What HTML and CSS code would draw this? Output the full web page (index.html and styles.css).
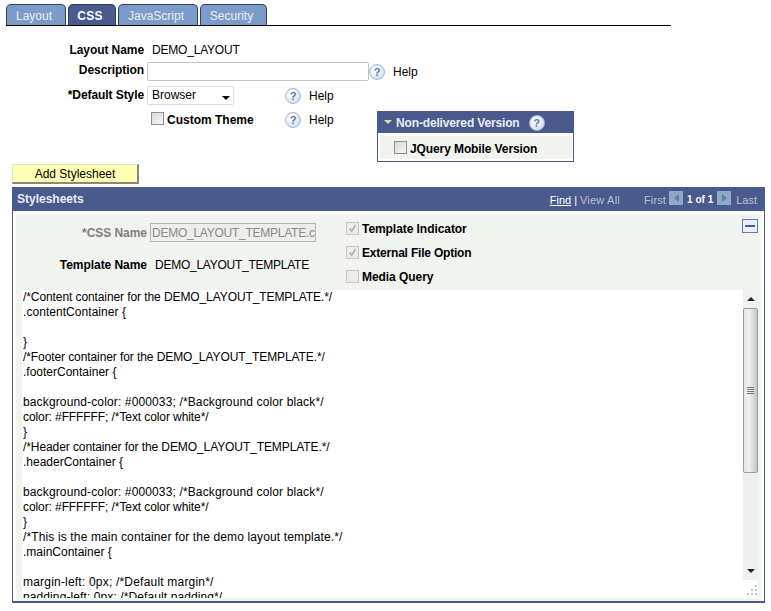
FILE: index.html
```html
<!DOCTYPE html>
<html lang="en">
<head>
<meta charset="utf-8">
<title>Layout CSS</title>
<link rel="stylesheet" href="styles.css">
</head>
<body>
<nav class="tabs">
  <a class="tab tab-layout">Layout</a>
  <a class="tab tab-css active">CSS</a>
  <a class="tab tab-js">JavaScript</a>
  <a class="tab tab-sec">Security</a>
</nav>

<section class="form">
  <div class="row row-name"><span class="label">Layout Name</span><span class="value">DEMO_LAYOUT</span></div>
  <div class="row row-desc">
    <span class="label">Description</span>
    <span class="input desc-input"></span>
    <span class="help-icon desc-icon">?</span><span class="help-text">Help</span>
  </div>
  <div class="split">
    <div class="split-left">
      <div class="row row-style">
        <span class="label">*Default Style</span>
        <span class="select">Browser<i class="select-arrow"></i></span>
        <span class="help-icon style-icon">?</span><span class="help-text">Help</span>
      </div>
      <div class="row row-theme">
        <span class="check"></span><span class="check-label theme-label">Custom Theme</span>
        <span class="help-icon theme-icon">?</span><span class="help-text">Help</span>
      </div>
    </div>
    <aside class="nd-box">
      <div class="nd-head">
        <i class="nd-arrow"></i><span class="nd-title">Non-delivered Version</span>
        <span class="help-icon nd-icon">?</span>
      </div>
      <div class="nd-body"><span class="check"></span><span class="check-label nd-label">JQuery Mobile Version</span></div>
    </aside>
  </div>
</section>

<button class="add-btn" type="button">Add Stylesheet</button>

<section class="panel">
  <header class="panel-head">
    <span class="panel-title">Stylesheets</span>
    <div class="pager">
      <a class="find">Find</a><span class="sep">|</span><span class="dim view-all">View All</span>
      <span class="dim first">First</span>
      <span class="nav-btn"><i class="tri-left"></i></span>
      <b class="count">1 of 1</b>
      <span class="nav-btn nav-next"><i class="tri-right"></i></span>
      <span class="dim last">Last</span>
    </div>
  </header>
  <div class="panel-body">
    <div class="fields">
      <div class="fields-left">
        <div class="f-row f-css">
          <span class="f-label disabled">*CSS Name</span>
          <span class="css-input">DEMO_LAYOUT_TEMPLATE.css</span>
        </div>
        <div class="f-row f-tpl">
          <span class="f-label">Template Name</span>
          <span class="tpl-value">DEMO_LAYOUT_TEMPLATE</span>
        </div>
      </div>
      <div class="fields-right">
        <div class="opt"><span class="check off"><svg viewBox="0 0 13 13" width="11" height="11"><path d="M3 6.5l2.5 3 4.5-7" fill="none" stroke="#a9a9a9" stroke-width="1.6"/></svg></span><span class="check-label">Template Indicator</span></div>
        <div class="opt"><span class="check off"><svg viewBox="0 0 13 13" width="11" height="11"><path d="M3 6.5l2.5 3 4.5-7" fill="none" stroke="#a9a9a9" stroke-width="1.6"/></svg></span><span class="check-label opt-tight">External File Option</span></div>
        <div class="opt"><span class="check off"></span><span class="check-label">Media Query</span></div>
      </div>
      <span class="collapse"><i></i></span>
    </div>
    <div class="editor">
<pre class="code"><span class="ls-n">/*Content container for the DEMO_LAYOUT_TEMPLATE.*/</span>
<span class="ls-c">.contentContainer {</span>

}
<span class="ls-n">/*Footer container for the DEMO_LAYOUT_TEMPLATE.*/</span>
.footerContainer {

<span class="ls-p">background-color: #000033; /*Background color black*/</span>
<span class="ls-n">color: #FFFFFF; /*Text color white*/</span>
}
<span class="ls-n">/*Header container for the DEMO_LAYOUT_TEMPLATE.*/</span>
.headerContainer {

<span class="ls-p">background-color: #000033; /*Background color black*/</span>
<span class="ls-n">color: #FFFFFF; /*Text color white*/</span>
}
<span class="ls-p">/*This is the main container for the demo layout template.*/</span>
.mainContainer {

<span class="ls-w">margin-left: 0px; /*Default margin*/</span>
<span class="ls-m">padding-left: 0px; /*Default padding*/</span></pre>
      <div class="scrollbar">
        <div class="sb-up"><i></i></div>
        <div class="sb-thumb"><i></i><i></i><i></i><i></i></div>
        <div class="sb-track"></div>
        <div class="sb-down"><i></i></div>
      </div>
      <svg class="grip" width="13" height="13" viewBox="0 0 13 13"><path fill="#c4c4c4" d="M10 1h2v2h-2zM6 5h2v2H6zM10 5h2v2h-2zM2 9h2v2H2zM6 9h2v2H6zM10 9h2v2h-2z"/></svg>
    </div>
  </div>
</section>
</body>
</html>
```

FILE: styles.css
```css
* { box-sizing: border-box; }
html, body { margin: 0; padding: 0; }
body {
  width: 771px;
  height: 611px;
  overflow: hidden;
  background: #fff;
  color: #000;
  font-family: "Liberation Sans", Arial, sans-serif;
  font-size: 12px;
  line-height: 14px;
}

/* tabs */
.tabs {
  display: flex;
  gap: 2px;
  width: 665px;
  height: 26px;
  margin-left: 6px;
  padding-top: 4px;
  border-bottom: 1px solid #000;
}
.tab {
  height: 21px;
  padding: 4px 4px 0 0;
  text-align: center;
  color: #e8eef6;
  background: #7b9cc9;
  border: 1px solid #2f3f66;
  border-bottom: 0;
  border-radius: 5px 5px 0 0;
}
.tab-layout { width: 60px; }
.tab-css { width: 48px; letter-spacing: 0.3px; }
.tab-js { width: 80px; }
.tab-sec { width: 67px; }
.tab.active { background: #4a5a8c; color: #fff; font-weight: bold; }

/* upper form */
.form { height: 135px; padding-top: 15px; }
.row { display: flex; align-items: center; }
.label {
  width: 144px;
  text-align: right;
  font-weight: bold;
  letter-spacing: -0.08px;
  flex: none;
}
.row-name { height: 17px; }
.value { margin-left: 8px; letter-spacing: -0.2px; }
.row-desc { height: 19px; margin-top: 4px; }
.row-desc .label { margin-bottom: 4px; }
.input {
  display: block;
  height: 19px;
  background: #fff;
  border: 1px solid #c4c4c4;
  border-radius: 2px;
}
.desc-input { width: 222px; margin-left: 3px; }
.help-icon {
  display: block;
  flex: none;
  width: 16px;
  height: 16px;
  border-radius: 50%;
  border: 1px solid #a3b8d6;
  background: radial-gradient(circle at 40% 35%, #ffffff 15%, #cbd9ec 85%);
  color: #5577ab;
  font-size: 11px;
  line-height: 14px;
  font-weight: bold;
  text-align: center;
}
.help-text { margin-left: 8px; }
.desc-icon { margin-left: 0; }
.split { display: flex; height: 75px; margin-top: 5px; }
.split-left { width: 377px; flex: none; }
.row-style { height: 19px; }
.row-style .label { margin-bottom: 2px; }
.select {
  display: block;
  position: relative;
  width: 87px;
  height: 19px;
  margin-left: 3px;
  padding: 1px 0 0 4px;
  border: 1px solid #dcdcdc;
  border-radius: 2px;
}
.select-arrow {
  position: absolute;
  right: 3px;
  top: 9px;
  border: 4px solid transparent;
  border-top-color: #000;
  border-bottom: 0;
}
.style-icon { margin-left: 51px; }
.row-theme { height: 16px; margin-top: 7px; }
.check {
  display: block;
  flex: none;
  width: 13px;
  height: 13px;
  background: linear-gradient(135deg, #d8d8d8, #f6f6f6);
  border: 1px solid #8f8f8f;
}
.row-theme .check { margin-left: 151px; margin-top: -4px; }
.check-label { font-weight: bold; margin-left: 3px; }
.theme-label { width: 118px; }
.theme-icon { margin-left: 0; }
.nd-box {
  width: 197px;
  height: 51px;
  margin-top: 25px;
  border: 1px solid #4a5a8c;
  background: #fff;
}
.nd-head {
  display: flex;
  align-items: center;
  height: 21px;
  background: #4a5a8c;
  color: #fff;
  font-weight: bold;
}
.nd-arrow {
  flex: none;
  margin: 0 0 2px 6px;
  border: 4px solid transparent;
  border-top-color: #e6d9a8;
  border-bottom: 0;
}
.nd-title { margin-left: 4px; color: #e8ebf3; letter-spacing: -0.15px; }
.nd-icon { margin-left: 9px; }
.nd-body {
  display: flex;
  align-items: center;
  height: 23px;
  margin: 3px 1px 0 2px;
  padding: 3px 0 0 14px;
  background: #f1f3ef;
}
.nd-body .check { margin-bottom: 3px; }
.nd-label { letter-spacing: -0.1px; }

/* button */
.add-btn {
  display: block;
  width: 127px;
  height: 20px;
  margin: 3px 0 0 12px;
  padding: 0;
  background: #ffffb3;
  border: 0;
  border-top: 1px solid #e4e4c0;
  border-left: 1px solid #e4e4c0;
  border-right: 2px solid #8a8a7a;
  border-bottom: 2px solid #8a8a7a;
  font: 12px/14px "Liberation Sans", Arial, sans-serif;
  color: #000;
}

/* panel */
.panel {
  width: 753px;
  height: 416px;
  margin: 3px 0 0 12px;
  border: 1px solid #4a5a8c;
  border-top: 0;
  border-bottom-width: 2px;
  background: #fff;
}
.panel-head {
  display: flex;
  justify-content: space-between;
  align-items: center;
  height: 24px;
  padding: 0 8px 0 5px;
  margin: 0 -1px;
  background: #4a5a8c;
  color: #fff;
}
.panel-title { font-weight: bold; color: #e8ebf3; }
.pager { display: flex; align-items: center; font-size: 11px; margin-top: 2px; }
.find { text-decoration: underline; color: #fff; }
.sep { margin: 0 3px; color: #fff; }
.dim { color: #b9c0d4; }
.view-all { letter-spacing: 0.2px; }
.first { margin-left: 24px; letter-spacing: 0.15px; }
.nav-btn {
  display: flex;
  align-items: center;
  justify-content: center;
  width: 14px;
  height: 14px;
  margin: -4px 4px 0 3px;
  background: #8fa9c7;
}
.nav-next { margin-left: 4px; margin-right: 5px; }
.tri-left { border: 4px solid transparent; border-right: 5px solid #5f7ea3; border-left: 0; }
.tri-right { border: 4px solid transparent; border-left: 5px solid #5f7ea3; border-right: 0; }
.count { font-size: 10px; color: #fff; }
.panel-body {
  height: 387px;
  margin: 3px 3px 0 3px;
  background: #f1f3ef;
  padding-bottom: 3px;
}
.fields { position: relative; display: flex; height: 76px; }
.fields-left { width: 330px; flex: none; }
.f-row { display: flex; align-items: center; }
.f-css { height: 19px; margin-top: 9px; }
.f-tpl { margin-top: 15px; height: 16px; }
.f-label { width: 131px; text-align: right; font-weight: bold; letter-spacing: -0.05px; flex: none; }
.f-label.disabled { color: #7f7f7f; }
.css-input {
  display: block;
  width: 166px;
  height: 19px;
  margin-left: 3px;
  padding: 2px 0 0 1px;
  overflow: hidden;
  white-space: nowrap;
  letter-spacing: -0.25px;
  color: #8a8a8a;
  background: #eeeeea;
  border: 1px solid #b4b4b0;
}
.tpl-value { margin-left: 8px; letter-spacing: -0.25px; }
.fields-right { padding-top: 7px; }
.opt { display: flex; align-items: center; height: 16px; margin-bottom: 8px; }
.opt .check-label { margin-left: 3px; letter-spacing: -0.06px; }
.opt .opt-tight { letter-spacing: -0.2px; }
.check.off {
  background: #ececec;
  border-color: #c6c6c6;
  margin-top: -2px;
}
.check.off svg { display: block; }
.collapse {
  position: absolute;
  right: 3px;
  top: 5px;
  display: flex;
  align-items: center;
  justify-content: center;
  width: 16px;
  height: 14px;
  background: #e9eef7;
  border: 1px solid #5d78bd;
}
.collapse i { display: block; width: 10px; height: 2px; background: #4a5a8c; }
.editor {
  position: relative;
  height: 308px;
  margin: 0 3px 0 6px;
  background: #fff;
  overflow: hidden;
}
.code {
  margin: 0;
  padding: 0 0 0 1px;
  font: 12px/15px "Liberation Sans", Arial, sans-serif;
}
.ls-n { letter-spacing: -0.09px; }
.ls-c { letter-spacing: 0.05px; }
.ls-p { letter-spacing: 0.135px; }
.ls-m { letter-spacing: 0.1px; }
.ls-w { letter-spacing: 0.2px; }
.scrollbar {
  position: absolute;
  right: 0;
  top: 0;
  display: flex;
  flex-direction: column;
  width: 15px;
  height: 290px;
  background: #eeeeee;
}
.sb-up, .sb-down {
  display: flex;
  align-items: center;
  justify-content: center;
  height: 18px;
  flex: none;
  background: #f0f0f0;
}
.sb-up i { border: 4px solid transparent; border-bottom-color: #222; border-top: 0; }
.sb-down i { border: 4px solid transparent; border-top-color: #222; border-bottom: 0; }
.sb-thumb {
  display: flex;
  flex-direction: column;
  justify-content: center;
  align-items: center;
  gap: 1px;
  height: 165px;
  flex: none;
  background: linear-gradient(90deg, #e6e6e6, #f0f0f0 40%, #c4c4c4);
  border: 1px solid #9a9a9a;
  border-radius: 2px;
}
.sb-thumb i { display: block; width: 7px; height: 1px; background: #777; }
.sb-track { flex: 1; }
.grip { position: absolute; right: 0; bottom: 1px; }
```
